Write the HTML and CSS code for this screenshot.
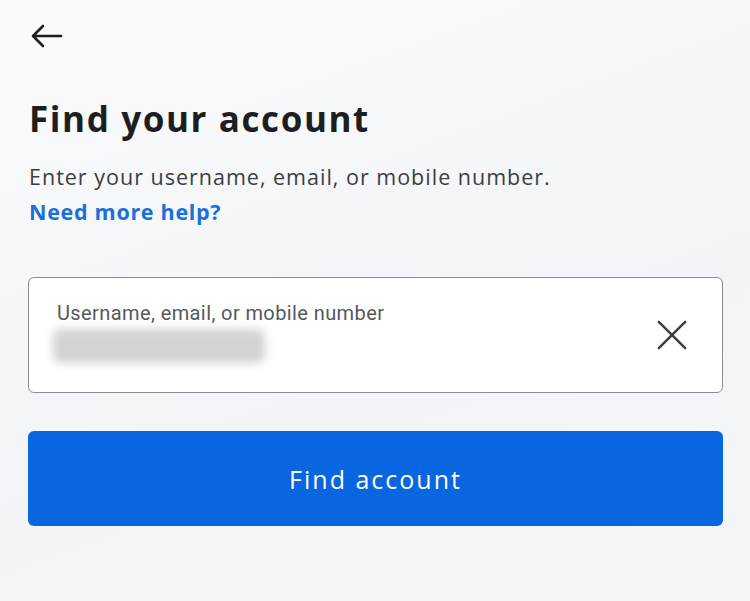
FILE: index.html
```html
<!DOCTYPE html>
<html>
<head>
<meta charset="UTF-8" />
<title>Find your account</title>
<link rel="stylesheet" href="styles.css">
</head>
<body>
<div class="page">
	<div class="topbar">
		<svg class="back" width="34" height="24" viewBox="0 0 34 24">
			<path d="M32 12 H4 M14 2 L4 12 L14 22" fill="none" stroke="#1c1e21" stroke-width="2.6" stroke-linecap="round" stroke-linejoin="round"/>
		</svg>
	</div>

	<h1 class="title">Find your account</h1>
	<p class="description">Enter your username, email, or mobile number.</p>
	<a class="help" href="#">Need more help?</a>

	<div class="field">
		<div class="fieldText">
			<div class="label">Username, email, or mobile number</div>
			<div class="value"><span class="blur"></span></div>
		</div>
		<svg class="clear" width="34" height="34" viewBox="0 0 34 34">
			<path d="M3 3 L31 31 M31 3 L3 31" fill="none" stroke="#3a3d42" stroke-width="2.6" stroke-linecap="round"/>
		</svg>
	</div>

	<button class="button">Find account</button>
</div>
</body>
</html>
```

FILE: styles.css
```css
body {
	margin: 0;
	background: linear-gradient(160deg, #fafbfc 0%, #f3f4f7 60%, #f4f6f9 100%);
	font-family: "Open Sans", "Noto Sans", sans-serif;
	color: #1c1e21;
	width: 750px;
	height: 601px;
	overflow: hidden;
}

.page {
	padding: 0 27px 0 28px;
}

.topbar {
	height: 90px;
	padding-top: 24px;
	box-sizing: border-box;
}

.back {
	display: block;
	margin-left: 1px;
}

.title {
	margin: 0;
	font-family: "Open Sans", "Noto Sans", sans-serif;
	font-weight: 700;
	font-size: 35px;
	line-height: 58px;
	letter-spacing: 1.6px;
	color: #1c1e21;
	padding-left: 1px;
}

.description {
	margin: 16px 0 0 0;
	font-size: 21.5px;
	line-height: 26px;
	letter-spacing: 1px;
	color: #3b3e43;
	padding-left: 1px;
}

.help {
	display: block;
	margin-top: 9px;
	font-size: 21.5px;
	line-height: 26px;
	letter-spacing: 0.7px;
	font-weight: 700;
	color: #1a6fd8;
	text-decoration: none;
	padding-left: 1px;
}

.field {
	margin-top: 52px;
	height: 116px;
	box-sizing: border-box;
	border: 1.5px solid #8a8d92;
	border-radius: 6px;
	background: #ffffff;
	display: flex;
	align-items: center;
	padding: 0 34px 0 22px;
}

.fieldText {
	flex: 1;
}

.label {
	font-family: Roboto, "Noto Sans", sans-serif;
	font-size: 20px;
	line-height: 22px;
	color: #55585d;
	padding-left: 6px;
	letter-spacing: 0.4px;
}

.value {
	height: 44px;
	display: flex;
	align-items: center;
}

.blur {
	display: block;
	width: 212px;
	height: 34px;
	margin-left: 2px;
	background: #d2d3d5;
	border-radius: 8px;
	filter: blur(5px);
}

.clear {
	display: block;
	width: 32px;
	height: 32px;
}

.button {
	display: block;
	width: 100%;
	margin-top: 38px;
	height: 95px;
	border: none;
	border-radius: 6px;
	background: #0866e0;
	color: #ffffff;
	font-family: "Open Sans", "Noto Sans", sans-serif;
	font-size: 25px;
	font-weight: 500;
	letter-spacing: 2px;
}
```
